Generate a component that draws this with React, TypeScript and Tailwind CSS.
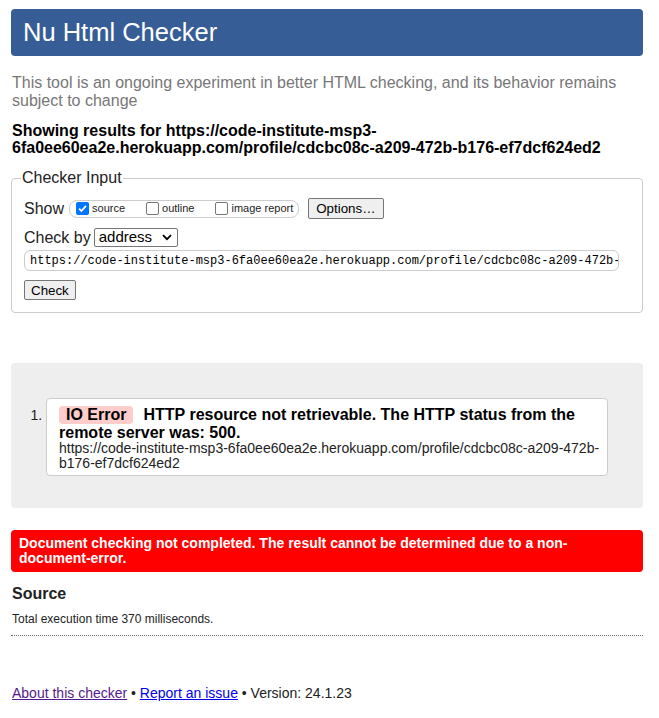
import React from "react";

const URL_TEXT =
  "https://code-institute-msp3-6fa0ee60ea2e.herokuapp.com/profile/cdcbc08c-a209-472b-b176-ef7dcf624ed2";

const Box: React.FC<{ checked?: boolean }> = ({ checked }) =>
  checked ? (
    <span className="flex h-[13px] w-[13px] shrink-0 items-center justify-center rounded-[2px] bg-[#0075ff]">
      <svg width="11" height="11" viewBox="0 0 11 11">
        <path d="M2 5.6 L4.4 8 L9 2.8" fill="none" stroke="#fff" strokeWidth="1.8" />
      </svg>
    </span>
  ) : (
    <span className="block h-[13px] w-[13px] shrink-0 rounded-[2px] border border-[#767676] bg-white" />
  );

const App: React.FC = () => {
  return (
    <div className="min-h-[718px] bg-white pl-[11px] pr-[16px] text-[#222] font-['Liberation_Sans',Arial,sans-serif]">
      {/* header */}
      <div className="pt-[9px]">
        <h1 className="flex h-[47px] items-center rounded-[4px] bg-[#365d95] pl-[12px] text-[25.5px] text-white">
          Nu Html Checker
        </h1>
      </div>

      <p className="mt-[18px] pl-[1px] text-[16px] leading-[18px] text-[#777]">
        This tool is an ongoing experiment in better HTML checking, and its behavior remains subject to change
      </p>

      <p className="mt-[12px] pl-[1px] text-[16px] font-bold leading-[17px] text-black">
        Showing results for {URL_TEXT}
      </p>

      {/* checker input */}
      <fieldset className="mt-[13px] rounded-[4px] border border-[#ccc] pb-[10px] pl-[9px] pr-[23px]">
        <legend className="px-[1px] text-[16px] leading-[18px]">Checker Input</legend>
        <div className="pl-[3px]">
          <div className="mt-[11px] flex h-[21px] items-center">
            <span className="text-[16px]">Show</span>
            <div className="ml-[5px] flex h-[18px] items-center rounded-[8px] border border-[#ccc] pl-[6px] pr-[5px] text-[11px]">
              <Box checked />
              <span className="ml-[3px]">source</span>
              <span className="ml-[21px]">
                <Box />
              </span>
              <span className="ml-[3px]">outline</span>
              <span className="ml-[21px]">
                <Box />
              </span>
              <span className="ml-[3px]">image report</span>
            </div>
            <button className="ml-[9px] h-[21px] rounded-[2px] border border-[#767676] bg-[#efefef] px-[7px] text-[13.333px] text-black">
              Options…
            </button>
          </div>

          <div className="mt-[9px] flex h-[19px] items-center">
            <span className="text-[16px]">Check by</span>
            <div className="ml-[3px] flex h-[19px] w-[84px] items-center justify-between rounded-[2px] border border-[#767676] bg-white pl-[4px] pr-[5px] text-[15px] text-black">
              <span>address</span>
              <svg width="10" height="7" viewBox="0 0 10 7">
                <path d="M1 1.2 L5 5.2 L9 1.2" fill="none" stroke="#000" strokeWidth="1.8" />
              </svg>
            </div>
          </div>

          <input
            readOnly
            value={URL_TEXT}
            className="mt-[3px] block h-[21px] w-full rounded-[6px] border border-[#ccc] bg-white pl-[5px] font-['Liberation_Mono',monospace] text-[12px] text-black outline-none"
          />

          <button className="mt-[9px] h-[20px] rounded-[2px] border border-[#767676] bg-[#efefef] px-[6px] text-[13.333px] text-black">
            Check
          </button>
        </div>
      </fieldset>

      {/* results */}
      <div className="mt-[50px] rounded-[4px] bg-[#eeeeee] pb-[32px] pl-[20px] pr-[35px] pt-[35px]">
        <ol className="list-decimal pl-[15px] text-[16px] marker:text-[14px] marker:text-[#222]">
          <li className="rounded-[4px] border border-[#ccc] bg-white pb-[4px] pl-[12px] pr-[5px] pt-[6px]">
            <p className="pr-[5px] font-bold leading-[17px] text-black">
              <span className="mr-[10px] inline-block rounded-[4px] bg-[#ffcccc] px-[7px] leading-[18px]">
                IO Error
              </span>
              HTTP resource not retrievable. The HTTP status from the remote server was: 500.
            </p>
            <p className="text-[14px] leading-[15px] text-[#222]">{URL_TEXT}</p>
          </li>
        </ol>
      </div>

      <div className="mt-[22px] rounded-[4px] bg-[#ff0000] px-[8px] py-[6px] text-[14px] font-bold leading-[15px] text-white">
        Document checking not completed. The result cannot be determined due to a non-document-error.
      </div>

      <h2 className="mt-[13px] pl-[1px] text-[16px] font-bold leading-[18px]">Source</h2>
      <p className="mt-[9px] pl-[1px] text-[12px] leading-[14px]">Total execution time 370 milliseconds.</p>
      <div className="mt-[9px] border-t border-dotted border-[#666]" />

      <p className="mt-[49px] pl-[1px] text-[14px] leading-[16px] text-[#222]">
        <a href="#" className="text-[#551a8b] underline">
          About this checker
        </a>{" "}
        •{" "}
        <a href="#" className="text-[#0000ee] underline">
          Report an issue
        </a>{" "}
        • Version: 24.1.23
      </p>
    </div>
  );
};

export default App;
